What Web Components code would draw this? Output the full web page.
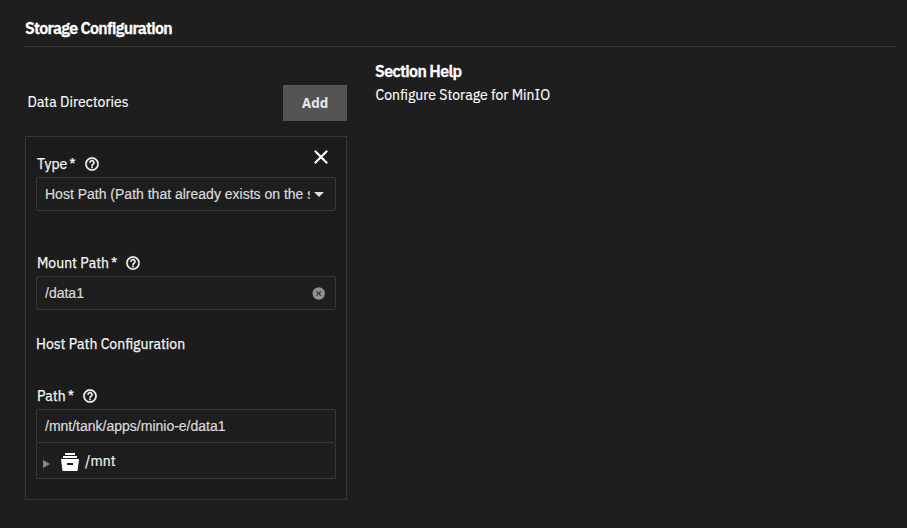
<!DOCTYPE html>
<html lang="en">
<head>
<meta charset="utf-8">
<title>Storage Configuration</title>
<style>
html,body{margin:0;height:100%;background:#1e1e1e}
body{overflow:hidden;color:#fff;font-family:"IBM Plex Sans",Roboto,"Liberation Sans",sans-serif;font-size:14px}
</style>
</head>
<body>
<storage-section></storage-section>
<script>
const define = (name, html) => customElements.define(name, class extends HTMLElement {
  constructor() {
    super();
    const t = document.createElement('template');
    t.innerHTML = html;
    this.attachShadow({mode: 'open'}).appendChild(t.content.cloneNode(true));
  }
});

define('help-icon', `<style>:host{display:block;width:16px;height:16px}svg{display:block}</style>
<svg width="16" height="16" viewBox="0 0 24 24" fill="#fff" stroke="#fff" stroke-width=".5"><path d="M11 18h2v-2h-2v2zm1-16C6.480 2 2 6.480 2 12s4.480 10 10 10 10-4.480 10-10S17.520 2 12 2zm0 18c-4.410 0-8-3.590-8-8s3.590-8 8-8 8 3.590 8 8-3.590 8-8 8zm0-14c-2.210 0-4 1.790-4 4h2c0-1.100.9-2 2-2s2 .9 2 2c0 2-3 1.750-3 5h2c0-2.250 3-2.500 3-5 0-2.210-1.790-4-4-4z"/></svg>`);

define('field-label', `<style>:host{display:flex;align-items:center;height:20px;padding-left:1px;line-height:20px;color:#f8f8f8;-webkit-text-stroke:.25px #f8f8f8}
.star{margin-left:2px}help-icon{margin-left:8px}</style>
<span><slot></slot></span><span class="star">*</span><help-icon></help-icon>`);

define('field-box', `<style>:host{display:flex;align-items:center;box-sizing:border-box;height:34px;border:1px solid #383838;border-radius:2px;background:#1e1e1e;padding:0 8px;color:#dadada;font:14px/20px "Liberation Sans",Arial,sans-serif;-webkit-text-stroke:.2px #dadada}
.v{flex:1;min-width:0;overflow:hidden;white-space:nowrap}</style>
<span class="v"><slot></slot></span><slot name="end"></slot>`);

define('caret-icon', `<style>:host{display:block;width:17px;height:5px}svg{display:block;margin-left:4px}</style>
<svg width="10" height="5"><path d="M0 0h10L5 5z" fill="#e0e0e0"/></svg>`);

define('clear-icon', `<style>:host{display:block;width:15px;height:13px}svg{display:block}</style>
<svg width="13" height="13"><circle cx="6.750" cy="6.500" r="6.200" fill="#919191"/><path d="M4.500 4.300l4.400 4.400M8.900 4.300l-4.400 4.400" stroke="#333" stroke-width="1.200"/></svg>`);

define('path-tree', `<style>:host{display:flex;align-items:center;box-sizing:border-box;height:36px;border:1px solid #383838;border-top:0;background:#1e1e1e;color:#f4f4f4;line-height:20px;-webkit-text-stroke:.2px #f4f4f4}
.a{margin:7px 0 0 6px}.b{margin:2px 0 0 11px}span{margin-left:6px;letter-spacing:.1px;padding-top:1px}</style>
<svg class="a" width="7" height="8"><path d="M0 0l7 4-7 4z" fill="#858585"/></svg>
<svg class="b" width="18" height="18" fill="#fff"><path d="M4 0h10v2H4zM2 3h14v2H2zM0 6h18l-1.500 12h-15z"/><path d="M6 10h6v2H6z" fill="#1e1e1e"/></svg>
<span><slot></slot></span>`);

define('directory-card', `<style>:host{display:block;box-sizing:border-box;width:322px;height:364px;border:1px solid #383838;background:#1c1c1c;padding:10px}
.top{display:flex;justify-content:space-between;height:30px}.top field-label{margin-top:7px}
.x{margin:3px 8px 0 0}
.mount{margin-top:42px;margin-bottom:3px}
.sub{height:20px;line-height:20px;margin-top:24px;color:#f8f8f8;-webkit-text-stroke:.25px #f8f8f8;white-space:nowrap}
.path{margin-top:32px;margin-bottom:3px}</style>
<div class="top"><field-label>Type</field-label><svg class="x" width="14" height="14"><path d="M.8.8l12.400 12.400M13.200.8L.8 13.200" stroke="#fff" stroke-width="2.200"/></svg></div>
<field-box>Host Path (Path that already exists on the system)<caret-icon slot="end"></caret-icon></field-box>
<field-label class="mount">Mount Path</field-label>
<field-box>/data1<clear-icon slot="end"></clear-icon></field-box>
<div class="sub">Host Path Configuration</div>
<field-label class="path">Path</field-label>
<field-box>/mnt/tank/apps/minio-e/data1</field-box>
<path-tree>/mnt</path-tree>`);

define('add-button', `<style>:host{display:flex;align-items:center;justify-content:center;box-sizing:border-box;width:64px;height:36px;padding-bottom:1px;background:#545454;color:#e6e6e6;font-weight:700;font-size:14px}</style><slot></slot>`);

define('section-help', `<style>:host{display:block;padding-top:14px}
h2{margin:0;font-size:16px;line-height:20px;font-weight:600;height:20px;letter-spacing:-.65px;margin-bottom:4px;-webkit-text-stroke:.3px #fff}
p{margin:0;line-height:20px;padding-left:.5px;-webkit-text-stroke:.15px #fff}</style><h2><slot name="title"></slot></h2><p><slot></slot></p>`);

define('storage-section', `<style>:host{display:block;box-sizing:border-box;width:907px;height:528px;padding:18px 12px 0 25px;background:#1e1e1e}
h1{margin:0;font-size:16px;line-height:20px;height:28px;font-weight:600;letter-spacing:-.7px;border-bottom:1px solid #383838;-webkit-text-stroke:.3px #fff}
.cols{display:grid;grid-template-columns:322px 1fr;column-gap:28px}
.bar{display:flex;align-items:center;justify-content:space-between;padding-left:2.500px;margin:38px 0 15px}
.bar span{padding-bottom:2px;-webkit-text-stroke:.15px #fff}</style>
<h1>Storage Configuration</h1>
<div class="cols"><div><div class="bar"><span>Data Directories</span><add-button>Add</add-button></div><directory-card></directory-card></div>
<section-help><span slot="title">Section Help</span>Configure Storage for MinIO</section-help></div>`);
</script>
</body>
</html>
